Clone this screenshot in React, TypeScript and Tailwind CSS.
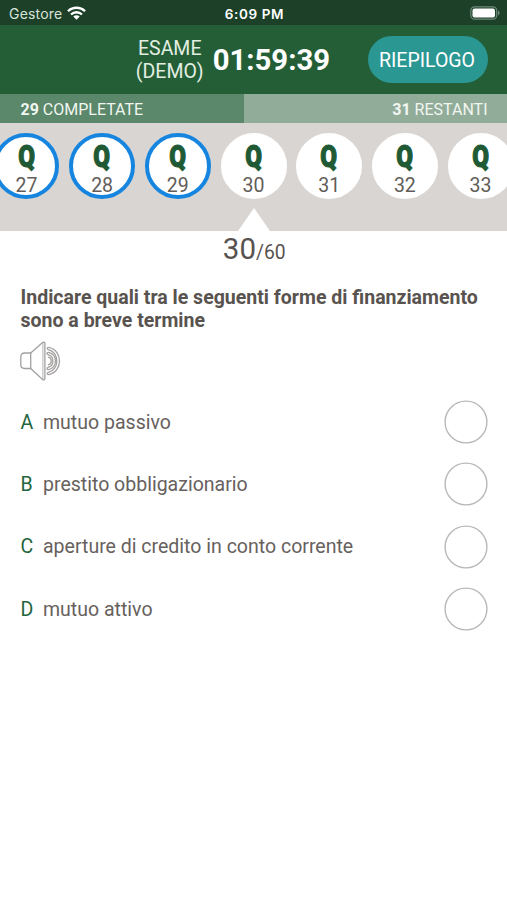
import { clsx } from 'clsx';

interface Answer {
  letter: string;
  label: string;
}

const TOTAL = 60;
const CURRENT = 30;
const COMPLETED = 29;
const VISIBLE = [27, 28, 29, 30, 31, 32, 33];

const ANSWERS: Answer[] = [
  { letter: 'A', label: 'mutuo passivo' },
  { letter: 'B', label: 'prestito obbligazionario' },
  { letter: 'C', label: 'aperture di credito in conto corrente' },
  { letter: 'D', label: 'mutuo attivo' },
];

function WifiIcon() {
  return (
    <svg width="19" height="14" viewBox="0 0 19 14" fill="none" stroke="#fff" strokeWidth="2.3">
      <path d="M1 5.2a12.2 12.2 0 0 1 17 0" />
      <path d="M4 8.5a7.8 7.8 0 0 1 11 0" />
      <path d="M9.5 13.8 6.3 10.6a4.6 4.6 0 0 1 6.4 0Z" fill="#fff" stroke="none" />
    </svg>
  );
}

function BatteryIcon() {
  return (
    <svg width="30" height="14" viewBox="0 0 30 14" fill="none">
      <rect x="0.8" y="0.8" width="25.9" height="12.4" rx="3.6" stroke="#6f8878" strokeWidth="1.2" />
      <rect x="2.5" y="2.4" width="22.5" height="9.2" rx="2" fill="#fff" />
      <path d="M28 4.6v4.8c1-.4 1.6-1.3 1.6-2.4S29 5 28 4.6Z" fill="#6f8878" />
    </svg>
  );
}

function SpeakerIcon() {
  return (
    <svg
      width="41"
      height="40"
      viewBox="0 0 41 40"
      fill="none"
      stroke="#a3a1a0"
      strokeWidth="1.3"
      strokeLinecap="round"
      strokeLinejoin="round"
    >
      <path d="M10.7 12H4.5C2.2 12 .8 13.6.8 15.7v8.1c0 2.2 1.5 3.7 3.7 3.7h6.2Z" />
      <path d="M10.7 12 22.6 1.5c1-.9 2.3-.4 2.3.9v35.2c0 1.3-1.3 1.8-2.3.9L10.7 27.5" />
      <path d="M22.9 1.8v36.4" strokeWidth="0.8" />
      <path d="M28.5 6.4c14.7 2.3 14.7 24.9 0 27.2-1.5.2-1.6-2-.1-2.3 11.2-2.4 11.2-20.2 0-22.6-1.5-.3-1.4-2.5.1-2.3Z" />
      <path d="M28.2 11.4c9.7 1.2 9.7 16 0 17.2-1.4.1-1.6-1.9-.1-2.2 6.4-1.7 6.4-11.1 0-12.8-1.5-.3-1.3-2.3.1-2.2Z" />
      <path d="M28.4 16.2c3.8 1 3.8 6.6 0 7.6" />
    </svg>
  );
}

function RadioCircle() {
  return (
    <svg width="44" height="44" viewBox="0 0 44 44" fill="none">
      <circle cx="22" cy="22" r="20.9" stroke="#b8b8b8" strokeWidth="1.4" />
    </svg>
  );
}

function StatusBar() {
  return (
    <div className="grid h-[25px] grid-cols-3 items-center bg-[#1c4128] pr-[7px] pl-[9px] text-white">
      <div className="flex items-center gap-[5px]">
        <span className="pt-[2px] font-['Inter',sans-serif] text-[14px] tracking-[0.2px] text-[#d8e2da]">
          Gestore
        </span>
        <WifiIcon />
      </div>
      <div className="pt-[3px] text-center font-['Inter',sans-serif] text-[13.5px] font-semibold tracking-[0.6px]">
        6:09 PM
      </div>
      <div className="flex justify-end pt-[1px]">
        <BatteryIcon />
      </div>
    </div>
  );
}

function Header() {
  return (
    <header className="flex h-[69px] items-center justify-end bg-[#235e37] pr-[19px] text-white">
      <div className="text-center text-[19.5px] leading-[23px] text-[#e3eee2]">
        ESAME
        <br />
        (DEMO)
      </div>
      <div className="mt-[2px] ml-[9px] text-[29.3px] leading-none font-bold">01:59:39</div>
      <button className="ml-[38px] h-[47px] w-[120px] rounded-full bg-[#2b9792] pt-[2px] pr-[2px] text-[19.5px]">
        RIEPILOGO
      </button>
    </header>
  );
}

function ProgressBar() {
  return (
    <div className="flex h-[29px] items-center bg-[#91ad9a] text-[16px] text-[#f1f6f0]">
      <div className="flex h-full w-[243.5px] items-center bg-[#5b876a] pt-[2px] pl-[20.5px]">
        <span>
          <b>{COMPLETED}</b> COMPLETATE
        </span>
      </div>
      <span className="flex-1 pt-[2px] pr-[19.5px] text-right">
        <b>{TOTAL - COMPLETED}</b> RESTANTI
      </span>
    </div>
  );
}

function QuestionBubble({ number }: { number: number }) {
  return (
    <div
      className={clsx(
        'flex size-[66px] shrink-0 flex-col items-center rounded-full border-4 bg-white',
        number <= COMPLETED ? 'border-[#1685df]' : 'border-white'
      )}
    >
      <span className="mt-[4px] h-[33px] scale-x-[0.78] text-[31px] leading-[32px] font-black text-[#205a35] [-webkit-text-stroke:1.2px_#205a35]">
        Q
      </span>
      <span className="text-[19.5px] leading-[26px] text-[#625d59]">{number}</span>
    </div>
  );
}

function QuestionStrip() {
  return (
    <nav className="relative flex h-[107.5px] justify-center gap-[9.7px] overflow-hidden bg-[#d9d5d2] pt-[10px]">
      {VISIBLE.map((n) => (
        <QuestionBubble key={n} number={n} />
      ))}
      <svg className="absolute bottom-0 left-1/2 -translate-x-1/2" width="32" height="23" viewBox="0 0 32 23">
        <path d="M16 0 32 23H0Z" fill="#fff" />
      </svg>
    </nav>
  );
}

function AnswerRow({ letter, label }: Answer) {
  return (
    <li className="flex h-[62.3px] items-center text-[19.53px]">
      <span className="w-[22.5px] pt-px text-[#23653d]">{letter}</span>
      <span className="flex-1 pt-px text-[#67615d]">{label}</span>
      <RadioCircle />
    </li>
  );
}

export default function App() {
  return (
    <div className="h-[900px] w-[507px] overflow-hidden bg-white font-['Roboto',sans-serif]">
      <StatusBar />
      <Header />
      <ProgressBar />
      <QuestionStrip />

      <main className="pr-[19px] pl-[20.5px]">
        <div className="text-center text-[29.5px] leading-[36px] text-[#57524f]">
          {CURRENT}
          <span className="text-[19.3px]">/{TOTAL}</span>
        </div>
        <h1 className="mt-[15px] text-[19.52px] leading-[23.5px] font-bold text-[#59534f]">
          Indicare quali tra le seguenti forme di finanziamento sono a breve termine
        </h1>
        <div className="mt-[8.5px] -ml-[0.5px] flex">
          <SpeakerIcon />
        </div>
        <ul className="mt-[9.8px]">
          {ANSWERS.map((a) => (
            <AnswerRow key={a.letter} {...a} />
          ))}
        </ul>
      </main>
    </div>
  );
}
